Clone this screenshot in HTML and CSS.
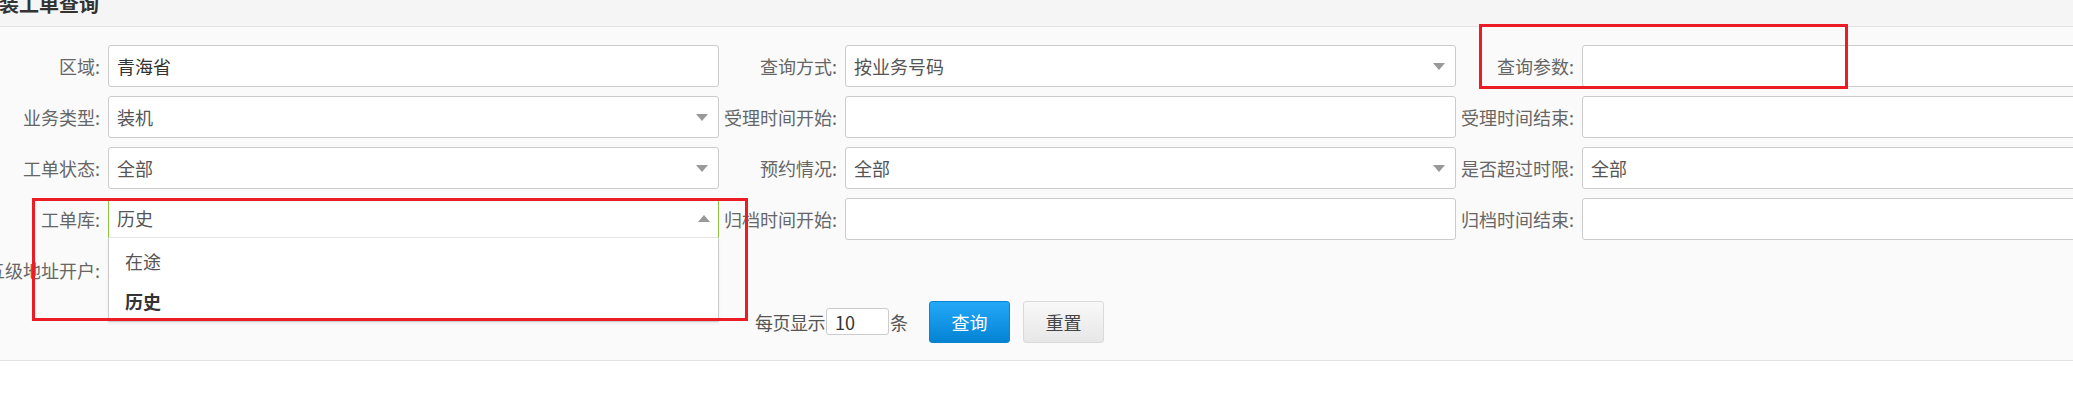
FILE: index.html
```html
<!DOCTYPE html>
<html lang="zh-CN">
<head>
<meta charset="utf-8">
<title>安装工单查询</title>
<link rel="stylesheet" href="styles.css">
</head>
<body>
<div class="panel">
  <div class="panel-head"><h3 class="panel-title">安装工单查询</h3></div>
  <div class="panel-body">
    <div class="form-grid">
      <label class="label">区域:</label>
      <div class="field field-strong">青海省</div>
      <label class="label">查询方式:</label>
      <div class="field">按业务号码<span class="caret"></span></div>
      <label class="label">查询参数:</label>
      <div class="field"></div>

      <label class="label">业务类型:</label>
      <div class="field">装机<span class="caret"></span></div>
      <label class="label">受理时间开始:</label>
      <div class="field"></div>
      <label class="label">受理时间结束:</label>
      <div class="field"></div>

      <label class="label">工单状态:</label>
      <div class="field">全部<span class="caret"></span></div>
      <label class="label">预约情况:</label>
      <div class="field">全部<span class="caret"></span></div>
      <label class="label">是否超过时限:</label>
      <div class="field">全部<span class="caret"></span></div>

      <label class="label">工单库:</label>
      <div class="field field-open">历史<span class="caret caret-up"></span>
        <ul class="dropdown">
          <li class="dropdown-item">在途</li>
          <li class="dropdown-item is-selected">历史</li>
        </ul>
      </div>
      <label class="label">归档时间开始:</label>
      <div class="field"></div>
      <label class="label">归档时间结束:</label>
      <div class="field"></div>

      <label class="label">五级地址开户:</label>
      <div class="field"></div>

      <div class="actions">
        <span class="page-text">每页显示</span>
        <span class="page-size">10</span>
        <span class="page-unit">条</span>
        <button class="btn btn-primary" type="button">查询</button>
        <button class="btn btn-default" type="button">重置</button>
      </div>
    </div>
  </div>
</div>
<div class="anno anno-library"></div>
<div class="anno anno-param"></div>
</body>
</html>
```
FILE: styles.css
```css
html, body {
  margin: 0;
  padding: 0;
  overflow: hidden;
  background: #fff;
}
body {
  position: relative;
  width: 2073px;
  height: 405px;
  font-family: "Noto Sans CJK SC", "Liberation Sans", sans-serif;
  font-size: 18px;
  color: #555;
}
.panel {
  margin-left: -18px;
  width: 2400px;
}
.panel-head {
  height: 26px;
  background: #f5f5f5;
  border-bottom: 1px solid #e4e4e4;
  overflow: hidden;
}
.panel-title {
  margin: -6px 0 0 0;
  padding-left: 0;
  text-indent: -3px;
  font-size: 20px;
  line-height: 20px;
  font-weight: bold;
  color: #333;
}
.panel-body {
  background: #fafafa;
  border-bottom: 1px solid #e2e2e2;
  padding: 18px 0 18px;
}
.form-grid {
  display: grid;
  grid-template-columns: 126px 611px 126px 611px 126px 611px;
  grid-auto-rows: 42px;
  row-gap: 9px;
}
.label {
  display: flex;
  align-items: center;
  justify-content: flex-end;
  padding-right: 8px;
  white-space: nowrap;
  color: #666;
}
.field {
  box-sizing: border-box;
  height: 42px;
  border: 1px solid #ccc;
  border-radius: 3px;
  background: #fff;
  display: flex;
  align-items: center;
  justify-content: space-between;
  padding: 0 10px 0 8px;
  color: #555;
  white-space: nowrap;
}
.field-strong {
  color: #333;
}
.caret {
  width: 0;
  height: 0;
  border-left: 6.5px solid transparent;
  border-right: 6.5px solid transparent;
  border-top: 7px solid #999;
}
.caret-up {
  border-top: 0;
  border-bottom: 7px solid #999;
  margin-right: -2px;
}
.field-open {
  position: relative;
  height: 40px;
  align-self: start;
  border-color: #8cc63f;
  border-bottom-color: #e4e4e4;
  border-radius: 3px 3px 0 0;
  z-index: 2;
}
.dropdown {
  position: absolute;
  left: -1px;
  right: -1px;
  top: calc(100% + 1px);
  margin: 0;
  padding: 3px 0 0;
  list-style: none;
  background: #fff;
  border: 1px solid #ccc;
  border-top: 0;
  box-shadow: 0 2px 3px rgba(0, 0, 0, 0.06);
}
.dropdown-item {
  height: 40px;
  display: flex;
  align-items: center;
  padding-left: 16px;
  color: #555;
}
.dropdown-item.is-selected {
  font-weight: bold;
  color: #333;
}
.actions {
  grid-row: 6;
  grid-column: 3 / 7;
  display: flex;
  align-items: center;
  padding-left: 36px;
  margin-top: 1px;
  color: #555;
}
.page-text {
  letter-spacing: -0.5px;
}
.page-size {
  box-sizing: border-box;
  width: 63px;
  height: 27px;
  margin-left: 1px;
  border: 1px solid #ccc;
  border-radius: 3px;
  background: #fff;
  padding-left: 8px;
  display: flex;
  align-items: center;
  color: #333;
}
.page-unit {
  margin-left: 1px;
}
.btn {
  box-sizing: border-box;
  width: 81px;
  height: 42px;
  border-radius: 3px;
  font-family: inherit;
  font-size: 18px;
  padding: 0;
  display: flex;
  align-items: center;
  justify-content: center;
}
.btn-primary {
  margin-left: 21px;
  background: linear-gradient(#23a8f8, #0583d3);
  border: 1px solid #0a84d0;
  color: #fff;
}
.btn-default {
  margin-left: 13px;
  background: linear-gradient(#f8f8f8, #e7e7e7);
  border: 1px solid #dadada;
  color: #444;
}
.anno {
  position: absolute;
  box-sizing: border-box;
  border: 3px solid #ec1c24;
  z-index: 5;
}
.anno-library {
  left: 32px;
  top: 198px;
  width: 716px;
  height: 123px;
}
.anno-param {
  left: 1479px;
  top: 24px;
  width: 369px;
  height: 65px;
}
```
